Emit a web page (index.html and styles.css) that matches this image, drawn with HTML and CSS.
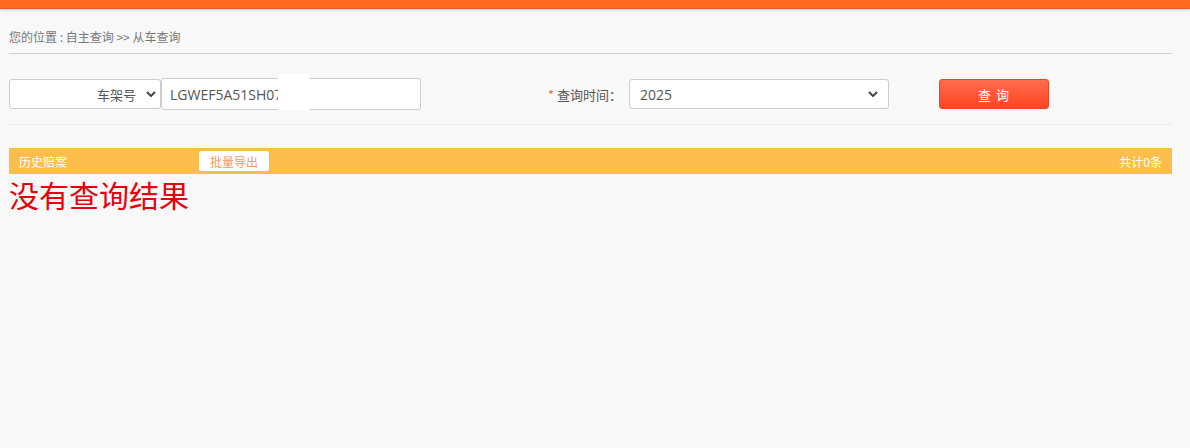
FILE: index.html
```html
<!DOCTYPE html>
<html lang="zh-CN">
  <head>
    <meta charset="UTF-8" />
    <meta name="viewport" content="width=device-width, initial-scale=1.0" />
    <title>从车查询</title>
    <link rel="stylesheet" href="styles.css">
  </head>
  <body>
    <div class="topbar"></div>

    <div class="main">
      <div class="crumb">您的位置 : 自主查询 &gt;&gt; 从车查询</div>

      <div class="search-row">
        <div class="select-wrap type-select">
          <select id="query-type">
            <option>车架号</option>
            <option>车牌号</option>
          </select>
          <svg class="chevron" viewBox="0 0 10 6" width="10" height="6"><path d="M1 1l4 4 4-4" /></svg>
        </div>
        <div class="input-wrap">
          <input type="text" id="query-value" value="LGWEF5A51SH079" />
          <span class="mask"></span>
        </div>

        <label class="field-label" for="query-year"><em>*</em> 查询时间：</label>
        <div class="select-wrap year-select">
          <select id="query-year">
            <option>2025</option>
            <option>2024</option>
            <option>2023</option>
          </select>
          <svg class="chevron" viewBox="0 0 10 6" width="10" height="6"><path d="M1 1l4 4 4-4" /></svg>
        </div>

        <button class="btn-search">查 询</button>
      </div>

      <div class="result-bar">
        <span class="bar-title">历史赔案</span>
        <button class="btn-export">批量导出</button>
        <span class="bar-count">共计0条</span>
      </div>
      <p class="no-result">没有查询结果</p>
    </div>
  </body>
</html>
```

FILE: styles.css
```css
body {
  margin: 0;
  background: #f8f8f8;
  font-family: "Noto Sans CJK SC", "Open Sans", sans-serif;
  font-size: 12px;
  color: #666;
}
.topbar {
  height: 8px;
  background: #ff6a23;
  border-bottom: 1px solid #d9652e;
  box-shadow: 0 1px 3px rgba(0, 0, 0, 0.2);
}
.main {
  padding: 0 18px 0 9px;
}
.crumb {
  margin-top: 18px;
  line-height: 20px;
  padding-bottom: 6px;
  border-bottom: 1px solid #cfcfcf;
  color: #777;
}
.search-row {
  display: flex;
  align-items: center;
  height: 32px;
  padding: 24px 0 14px;
  border-bottom: 1px solid #ececec;
}
.select-wrap {
  position: relative;
}
.select-wrap select {
  appearance: none;
  -webkit-appearance: none;
  height: 30px;
  border: 1px solid #ccc;
  border-radius: 3px;
  background: #fff;
  color: #555;
  font-family: "Open Sans", "Noto Sans CJK SC", sans-serif;
  font-size: 14px;
  outline: none;
  display: block;
}
.type-select select {
  width: 152px;
  padding: 0 24px 0 8px;
  text-align-last: right;
  font-family: "Noto Sans CJK SC", sans-serif;
  font-size: 13px;
}
.year-select select {
  width: 260px;
  padding: 0 24px 0 10px;
}
.chevron {
  position: absolute;
  top: 12px;
  pointer-events: none;
}
.chevron path {
  fill: none;
  stroke: #444;
  stroke-width: 2;
}
.type-select .chevron {
  right: 5px;
}
.year-select .chevron {
  right: 11px;
}
.input-wrap {
  position: relative;
}
.input-wrap input {
  box-sizing: border-box;
  width: 260px;
  height: 32px;
  padding: 0 8px;
  border: 1px solid #ccc;
  border-radius: 3px;
  background: #fff;
  color: #555;
  font-family: "Open Sans", sans-serif;
  font-size: 14px;
  outline: none;
  display: block;
}
.mask {
  position: absolute;
  left: 117px;
  top: -4px;
  width: 32px;
  height: 36px;
  background: #fff;
}
.field-label {
  margin-left: 127px;
  width: 81px;
  font-size: 13px;
  color: #555;
}
.field-label em {
  font-style: normal;
  color: #f26a3a;
}
.btn-search {
  margin-left: 50px;
  width: 110px;
  height: 30px;
  border: 1px solid #e8461f;
  border-radius: 3px;
  background: linear-gradient(#ff6d4d, #ff4523);
  color: #fff;
  font-family: "Noto Sans CJK SC", sans-serif;
  font-size: 13px;
  letter-spacing: 1px;
  cursor: pointer;
}
.result-bar {
  display: flex;
  align-items: center;
  height: 26px;
  margin-top: 23px;
  padding: 0 10px;
  background: #fcbd4b;
  color: #fff;
}
.bar-title {
  width: 180px;
}
.btn-export {
  width: 70px;
  height: 20px;
  padding: 0;
  border: none;
  border-radius: 2px;
  background: #fff;
  color: #f09a5c;
  font-family: "Noto Sans CJK SC", sans-serif;
  font-size: 12px;
  cursor: pointer;
}
.bar-count {
  margin-left: auto;
}
.no-result {
  margin: 2px 0 0;
  color: #e8000b;
  font-size: 30px;
  line-height: 36px;
}
```
